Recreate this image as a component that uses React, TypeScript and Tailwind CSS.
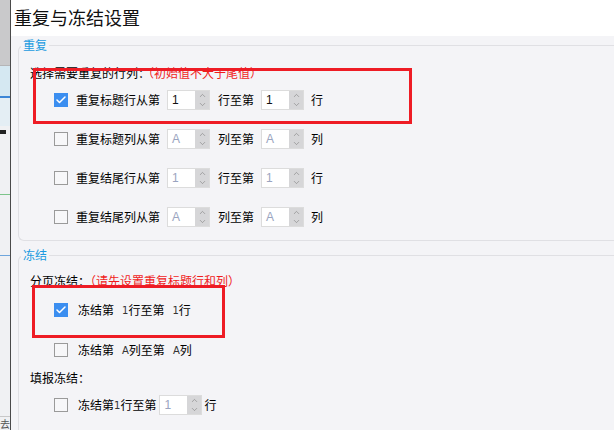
import { Check, ChevronUp, ChevronDown } from 'lucide-react';

const font = { fontFamily: '"Noto Sans CJK SC", "Microsoft YaHei", sans-serif' };

const Box = ({ checked }: { checked?: boolean }) =>
  checked ? (
    <span className="w-[14px] h-[14px] bg-[#3b8ef0] flex items-center justify-center shrink-0">
      <Check className="w-[12px] h-[12px] text-white" strokeWidth={3} />
    </span>
  ) : (
    <span className="w-[14px] h-[14px] border border-[#9a9a9a] bg-[#f7f7f9] shrink-0" />
  );

const Spin = ({ value, active }: { value: string; active?: boolean }) => (
  <span className="flex h-[20px] w-[43px] border border-[#dcdcdc] bg-white shrink-0">
    <span className={`flex-1 flex items-center pl-[4px] text-[12px] font-['Liberation_Sans'] ${active ? 'text-[#111]' : 'text-[#9aa4c0]'}`}>
      {value}
    </span>
    <span className="w-[14px] bg-[#d6d6d8] flex flex-col items-center justify-center text-[#7a7a7a]">
      <ChevronUp className="w-[11px] h-[9px]" strokeWidth={1.5} />
      <ChevronDown className="w-[11px] h-[9px]" strokeWidth={1.5} />
    </span>
  </span>
);

const SpinRow = ({ checked, label, mid, end, value }: { checked?: boolean; label: string; mid: string; end: string; value: string }) => (
  <div className="flex items-center h-[20px] ml-[24px] text-[12px] text-[#000]">
    <Box checked={checked} />
    <span className="ml-[8px]">{label}</span>
    <span className="ml-[7px]"><Spin value={value} active={checked} /></span>
    <span className="ml-[8px]">{mid}</span>
    <span className="ml-[7px]"><Spin value={value} active={checked} /></span>
    <span className="ml-[7px]">{end}</span>
  </div>
);

const InlineRow = ({ checked, a, b, c, d }: { checked?: boolean; a: string; b: string; c: string; d: string }) => (
  <div className="flex items-center h-[20px] ml-[24px] text-[12px] text-[#000]">
    <Box checked={checked} />
    <span className="ml-[10px]">{a}</span>
    <span className="ml-[8px] font-['DejaVu_Sans'] text-[10px] text-[#333]">{b}</span>
    <span>{c}</span>
    <span className="ml-[8px] font-['DejaVu_Sans'] text-[10px] text-[#333]">{b}</span>
    <span>{d}</span>
  </div>
);

const Legend = ({ children }: { children: string }) => (
  <span className="absolute left-[2px] top-[-9px] px-[2px] bg-[#f4f4f7] text-[12px] leading-[16px] text-[#1a9be0]">
    {children}
  </span>
);

export default function App() {
  return (
    <div className="relative w-[614px] h-[430px] overflow-hidden flex bg-[#f4f4f7]" style={font}>
      {/* background window peeking on the left */}
      <div className="w-[10px] h-full flex flex-col shrink-0 bg-[#f0f1f3]">
        <div className="h-[66px] bg-[#c9c9cb] border-b border-[#b5b5b7]" />
        <div className="h-[30px] bg-[#d5e8f2]" />
        <div className="h-[2px] bg-[#3d86d6]" />
        <div className="h-[28px] bg-[#e4eef4]" />
        <div className="h-[4px] mt-[4px] w-[6px] bg-[#222]" />
        <div className="h-[1px] mt-[60px] bg-[#7cc48a]" />
        <div className="h-[1px] mt-[60px] bg-[#6fa6dc]" />
        <div className="flex-1" />
        <div className="h-[14px] border-t border-[#c8c8c8] text-[10px] leading-[14px] text-[#555]">去</div>
      </div>
      <div className="w-[1px] h-full bg-[#4a4a4a] shrink-0" />

      <div className="flex-1 flex flex-col min-w-0">
        <div className="h-[36px] bg-white flex items-center pl-[3px] shrink-0">
          <span className="text-[18px] text-[#111] leading-none -mt-[2px]">重复与冻结设置</span>
        </div>
        <div className="flex-1 pl-[7px]">
          {/* 重复 */}
          <div className="relative mt-[9px] border-t border-l border-b border-[#e0e0e4] rounded-l-[6px] pl-[11px] pt-[17px] pb-[13px]">
            <Legend>重复</Legend>
            <div className="text-[12px] leading-[20px] text-[#000]">
              选择需要重复的行列：<span className="text-[#f01c1c] -ml-[2px]">（初始值不大于尾值）</span>
            </div>
            <div className="mt-[7px] flex flex-col gap-[19px]">
              <SpinRow checked label="重复标题行从第" mid="行至第" end="行" value="1" />
              <SpinRow label="重复标题列从第" mid="列至第" end="列" value="A" />
              <SpinRow label="重复结尾行从第" mid="行至第" end="行" value="1" />
              <SpinRow label="重复结尾列从第" mid="列至第" end="列" value="A" />
            </div>
          </div>

          {/* 冻结 */}
          <div className="relative mt-[14px] border-t border-l border-[#e0e0e4] rounded-tl-[6px] pl-[11px] pt-[15px] pb-[40px]">
            <Legend>冻结</Legend>
            <div className="text-[12px] leading-[20px] text-[#000]">
              分页冻结：<span className="text-[#f01c1c]">（请先设置重复标题行和列）</span>
            </div>
            <div className="mt-[9px] flex flex-col gap-[20px]">
              <InlineRow checked a="冻结第" b="1" c="行至第" d="行" />
              <InlineRow a="冻结第" b="A" c="列至第" d="列" />
            </div>
            <div className="mt-[8px] text-[12px] leading-[20px] text-[#000]">填报冻结：</div>
            <div className="mt-[7px] flex items-center h-[20px] ml-[24px] text-[12px] text-[#000]">
              <Box />
              <span className="ml-[10px]">冻结第</span>
              <span className="font-['DejaVu_Sans'] text-[10px] text-[#333]">1</span>
              <span>行至第</span>
              <span className="ml-[3px]"><Spin value="1" /></span>
              <span className="ml-[2px]">行</span>
            </div>
          </div>
        </div>
      </div>

      {/* red annotation boxes */}
      <div className="absolute left-[33px] top-[68px] w-[379px] h-[56px] border-[3px] border-[#ee1c25]" />
      <div className="absolute left-[32px] top-[285px] w-[193px] h-[53px] border-[3px] border-[#ee1c25]" />
    </div>
  );
}
